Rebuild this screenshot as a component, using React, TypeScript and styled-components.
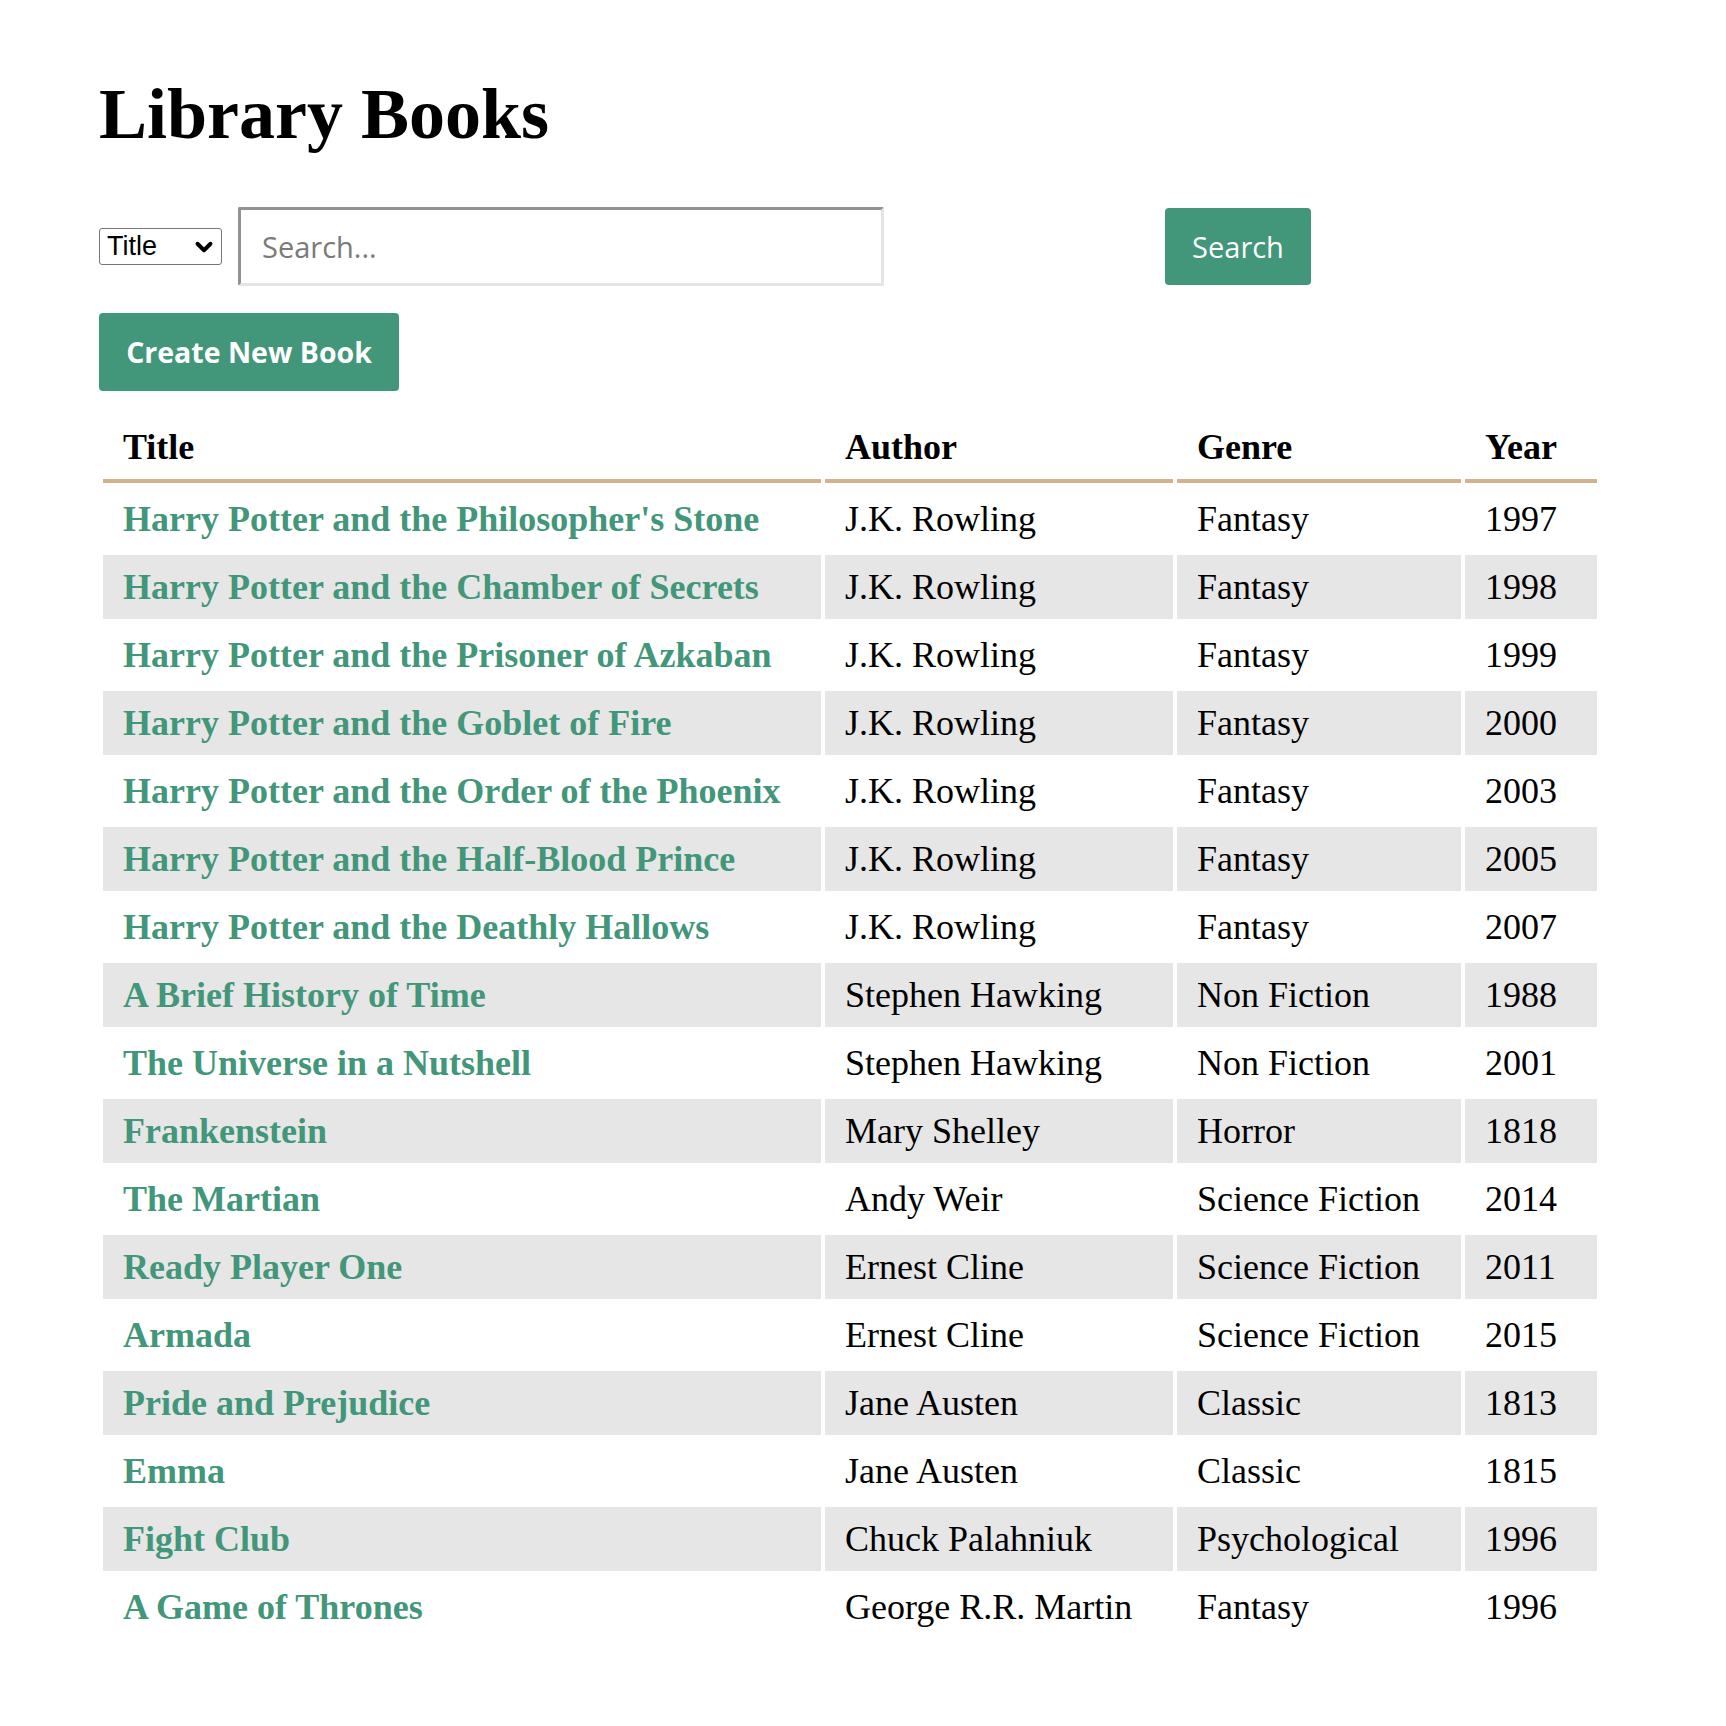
import React, { useState } from 'react';
import styled, { createGlobalStyle } from 'styled-components';
import { ChevronDown } from 'lucide-react';

type Book = {
  id: number;
  title: string;
  author: string;
  genre: string;
  year: number;
};

const books: Book[] = [
  { id: 1, title: "Harry Potter and the Philosopher's Stone", author: 'J.K. Rowling', genre: 'Fantasy', year: 1997 },
  { id: 2, title: 'Harry Potter and the Chamber of Secrets', author: 'J.K. Rowling', genre: 'Fantasy', year: 1998 },
  { id: 3, title: 'Harry Potter and the Prisoner of Azkaban', author: 'J.K. Rowling', genre: 'Fantasy', year: 1999 },
  { id: 4, title: 'Harry Potter and the Goblet of Fire', author: 'J.K. Rowling', genre: 'Fantasy', year: 2000 },
  { id: 5, title: 'Harry Potter and the Order of the Phoenix', author: 'J.K. Rowling', genre: 'Fantasy', year: 2003 },
  { id: 6, title: 'Harry Potter and the Half-Blood Prince', author: 'J.K. Rowling', genre: 'Fantasy', year: 2005 },
  { id: 7, title: 'Harry Potter and the Deathly Hallows', author: 'J.K. Rowling', genre: 'Fantasy', year: 2007 },
  { id: 8, title: 'A Brief History of Time', author: 'Stephen Hawking', genre: 'Non Fiction', year: 1988 },
  { id: 9, title: 'The Universe in a Nutshell', author: 'Stephen Hawking', genre: 'Non Fiction', year: 2001 },
  { id: 10, title: 'Frankenstein', author: 'Mary Shelley', genre: 'Horror', year: 1818 },
  { id: 11, title: 'The Martian', author: 'Andy Weir', genre: 'Science Fiction', year: 2014 },
  { id: 12, title: 'Ready Player One', author: 'Ernest Cline', genre: 'Science Fiction', year: 2011 },
  { id: 13, title: 'Armada', author: 'Ernest Cline', genre: 'Science Fiction', year: 2015 },
  { id: 14, title: 'Pride and Prejudice', author: 'Jane Austen', genre: 'Classic', year: 1813 },
  { id: 15, title: 'Emma', author: 'Jane Austen', genre: 'Classic', year: 1815 },
  { id: 16, title: 'Fight Club', author: 'Chuck Palahniuk', genre: 'Psychological', year: 1996 },
  { id: 17, title: 'A Game of Thrones', author: 'George R.R. Martin', genre: 'Fantasy', year: 1996 },
];

const columns = [
  { key: 'title', label: 'Title', width: 718 },
  { key: 'author', label: 'Author', width: 348 },
  { key: 'genre', label: 'Genre', width: 284 },
  { key: 'year', label: 'Year', width: 132 },
];

const App: React.FC = () => {
  const [field, setField] = useState('title');
  const [query, setQuery] = useState('');

  return (
    <>
      <GlobalStyle />
      <Page>
        <Heading>Library Books</Heading>
        <SearchRow onSubmit={(e) => e.preventDefault()}>
          <SelectWrap>
            <FieldSelect value={field} onChange={(e) => setField(e.target.value)}>
              <option value='title'>Title</option>
              <option value='author'>Author</option>
              <option value='genre'>Genre</option>
              <option value='year'>Year</option>
            </FieldSelect>
            <Chevron size={26} strokeWidth={3.6} />
          </SelectWrap>
          <SearchInput
            type='text'
            placeholder='Search...'
            value={query}
            onChange={(e) => setQuery(e.target.value)}
          />
          <SearchButton type='submit'>Search</SearchButton>
        </SearchRow>
        <CreateButton type='button'>Create New Book</CreateButton>
        <BookTable>
          <colgroup>
            {columns.map((c) => (
              <Col key={c.key} $width={c.width} />
            ))}
          </colgroup>
          <thead>
            <tr>
              {columns.map((c) => (
                <HeadCell key={c.key}>{c.label}</HeadCell>
              ))}
            </tr>
          </thead>
          <tbody>
            {books.map((book) => (
              <BookRow key={book.id}>
                <Cell>
                  <TitleLink href={`#/books/${book.id}`}>{book.title}</TitleLink>
                </Cell>
                <Cell>{book.author}</Cell>
                <Cell>{book.genre}</Cell>
                <Cell>{book.year}</Cell>
              </BookRow>
            ))}
          </tbody>
        </BookTable>
      </Page>
    </>
  );
};

export default App;

const green = '#42967a';

const GlobalStyle = createGlobalStyle`
  body {
    margin: 0;
    background: #ffffff;
    color: #000000;
    font-family: 'Liberation Serif', 'Times New Roman', serif;
  }
`;

const Page = styled.div`
  padding: 74px 0 80px 99px;
`;

const Heading = styled.h1`
  margin: 0;
  font-size: 72px;
  line-height: 80px;
  font-weight: 700;
`;

const SearchRow = styled.form`
  display: flex;
  align-items: center;
  gap: 16px;
  height: 80px;
  margin-top: 52px;
`;

const SelectWrap = styled.div`
  position: relative;
  display: flex;
`;

const FieldSelect = styled.select`
  appearance: none;
  box-sizing: border-box;
  width: 123px;
  height: 37px;
  font-family: 'Liberation Sans', Arial, sans-serif;
  font-size: 27px;
  color: #000;
  background: #fff;
  border: 1px solid #767676;
  border-radius: 3px;
  padding: 0 7px;
`;

const Chevron = styled(ChevronDown)`
  position: absolute;
  right: 5px;
  top: 6px;
  color: #000;
  pointer-events: none;
`;

const SearchInput = styled.input`
  box-sizing: border-box;
  width: 646px;
  height: 79px;
  padding: 0 21px;
  font-family: 'Open Sans', sans-serif;
  font-size: 29px;
  border-style: solid;
  border-width: 3px;
  border-color: #929292 #e5e5e5 #e5e5e5 #929292;
  border-radius: 2px;
  outline: none;

  &::placeholder {
    color: #7a7a7a;
  }
`;

const Button = styled.button`
  box-sizing: border-box;
  height: 77px;
  padding: 0 28px;
  border: none;
  border-radius: 4px;
  background: ${green};
  color: #ffffff;
  font-family: 'Open Sans', sans-serif;
  font-size: 29px;
  cursor: pointer;
`;

const SearchButton = styled(Button)`
  margin-left: 265px;
  width: 146px;
  padding: 0;
  font-weight: 400;
`;

const CreateButton = styled(Button)`
  display: block;
  width: 300px;
  height: 78px;
  padding: 0;
  margin-top: 27px;
  font-size: 28.5px;
  font-weight: 700;
`;

const BookTable = styled.table`
  margin-top: 20px;
  width: 1502px;
  table-layout: fixed;
  border-collapse: separate;
  border-spacing: 4px;
  font-size: 36px;
  line-height: 40px;
`;

const Col = styled.col<{ $width: number }>`
  width: ${({ $width }) => $width}px;
`;

const HeadCell = styled.th`
  text-align: left;
  font-weight: 700;
  padding: 12px 20px;
  border-bottom: 4px solid #d2b48c;
  white-space: nowrap;
`;

const Cell = styled.td`
  padding: 12px 20px;
  white-space: nowrap;
`;

const BookRow = styled.tr`
  &:nth-child(even) td {
    background: #e6e6e6;
  }
`;

const TitleLink = styled.a`
  color: ${green};
  font-weight: 700;
  text-decoration: none;
`;
